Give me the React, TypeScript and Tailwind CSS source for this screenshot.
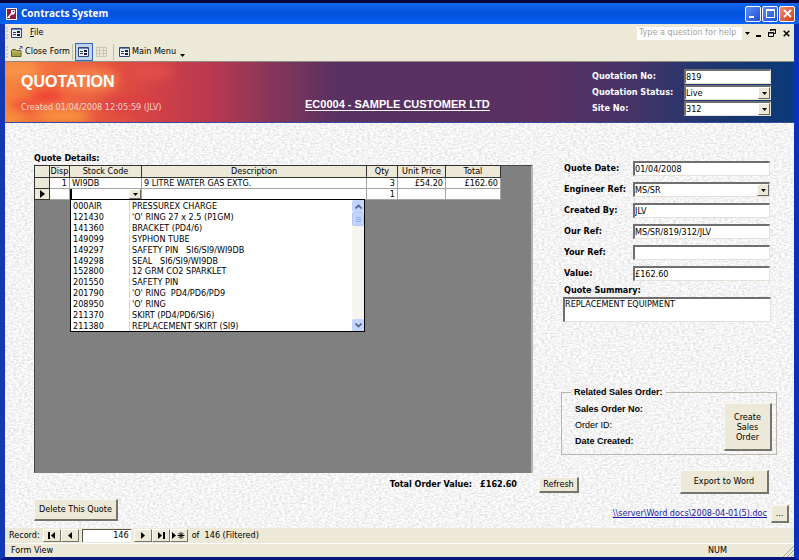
import { useState } from "react";
import type { ReactNode } from "react";

const lines = [
  { disp: 1, code: 'WI9DB', description: '9 LITRE WATER GAS EXTG.', qty: 3, price: '£54.20', total: '£162.60' },
];

const stockItems = [
  { code: '000AIR', name: 'PRESSUREX CHARGE' },
  { code: '121430', name: "'O' RING 27 x 2.5 (P1GM)" },
  { code: '141360', name: 'BRACKET (PD4/6)' },
  { code: '149099', name: 'SYPHON TUBE' },
  { code: '149297', name: 'SAFETY PIN   SI6/SI9/WI9DB' },
  { code: '149298', name: 'SEAL   SI6/SI9/WI9DB' },
  { code: '152800', name: '12 GRM CO2 SPARKLET' },
  { code: '201550', name: 'SAFETY PIN' },
  { code: '201790', name: "'O' RING  PD4/PD6/PD9" },
  { code: '208950', name: "'O' RING" },
  { code: '211370', name: 'SKIRT (PD4/PD6/SI6)' },
  { code: '211380', name: 'REPLACEMENT SKIRT (SI9)' },
];

const fields = [
  { id: 'quote-date', label: 'Quote Date:', value: '01/04/2008' },
  { id: 'engineer', label: 'Engineer Ref:', value: 'MS/SR', select: true },
  { id: 'created-by', label: 'Created By:', value: 'JLV' },
  { id: 'our-ref', label: 'Our Ref:', value: 'MS/SR/819/312/JLV' },
  { id: 'your-ref', label: 'Your Ref:', value: '' },
  { id: 'value', label: 'Value:', value: '£162.60' },
];

const sunken = "border-t-2 border-l-2 border-b border-r border-t-[#6f6f6f] border-l-[#6f6f6f] border-b-[#e4e2d8] border-r-[#e4e2d8] bg-white";
const raised = "border-t border-l border-b-2 border-r-2 border-t-[#f8f7f1] border-l-[#f8f7f1] border-b-[#77756b] border-r-[#77756b] bg-[#ece9d8]";

const DropArrow = () => (
  <span className="pointer-events-none absolute inset-y-0 right-0 flex w-3 items-center justify-center border border-t-white border-l-white border-b-[#6b695f] border-r-[#6b695f] bg-[#ece9d8]">
    <svg width="5" height="3" viewBox="0 0 5 3"><path d="M0 0h5L2.5 3z" /></svg>
  </span>
);

const TextField = ({ id, value }: { id: string; value: string }) => (
  <input id={id} defaultValue={value} className={`block h-[15px] w-full min-w-0 outline-none ${sunken}`} />
);

const SelectField = ({ id, value }: { id: string; value: string }) => (
  <div className={`relative h-[15px] w-full ${sunken}`}>
    <select id={id} defaultValue={value} className="block h-3 w-full appearance-none bg-transparent leading-3 outline-none">
      <option>{value}</option>
    </select>
    <DropArrow />
  </div>
);

const Button = ({ children, className }: { children: ReactNode; className: string }) => (
  <button type="button" className={`flex items-center justify-center ${raised} ${className}`}>{children}</button>
);

const FormIcon = () => (
  <svg width="11" height="10" viewBox="0 0 11 10">
    <path d="M.5.5h10v9H.5z" fill="#e9edf8" stroke="#33447c" />
    <path d="M1 1h9v1H1z" fill="#6a86c8" />
    <path d="M2 4.500h3M2 6.500h3" stroke="#333a55" />
    <path d="M6 3h3v2H6zM6 6h3v2H6z" fill="#1c2038" />
  </svg>
);

const Grip = () => <span className="h-3 w-[3px] border-l-2 border-dotted border-[#d0ccba]" />;

// woven paper look behind the form
const Paper = () => (
  <svg className="absolute inset-0 -z-10 h-full w-full" aria-hidden="true">
    <filter id="paper" x="0" y="0" width="100%" height="100%" colorInterpolationFilters="sRGB">
      <feTurbulence type="fractalNoise" baseFrequency="0.35 0.6" numOctaves="3" seed="4" />
      <feColorMatrix values=".25 0 0 0 .83  .25 0 0 0 .83  .25 0 0 0 .835  0 0 0 0 1" />
    </filter>
    <rect width="100%" height="100%" filter="url(#paper)" />
  </svg>
);

const Sunset = () => (
  <svg className="absolute inset-0 -z-10 h-full w-full" viewBox="0 0 789 60" preserveAspectRatio="none" aria-hidden="true">
    <defs>
      <linearGradient id="sky">
        <stop offset="0" stopColor="#f5823c" />
        <stop offset=".07" stopColor="#f06a40" />
        <stop offset=".14" stopColor="#e2503f" />
        <stop offset=".2" stopColor="#cf4048" />
        <stop offset=".27" stopColor="#b53850" />
        <stop offset=".34" stopColor="#85365a" />
        <stop offset=".42" stopColor="#583162" />
        <stop offset=".68" stopColor="#5a3062" />
        <stop offset=".8" stopColor="#443468" />
        <stop offset=".9" stopColor="#1c3670" />
        <stop offset="1" stopColor="#0a3a78" />
      </linearGradient>
      <filter id="soft" x="-30%" y="-60%" width="160%" height="220%"><feGaussianBlur stdDeviation="5" /></filter>
    </defs>
    <rect width="789" height="60" fill="url(#sky)" />
    <g filter="url(#soft)">
      <ellipse cx="85" cy="18" rx="28" ry="12" fill="#f6824c" />
      <ellipse cx="15" cy="8" rx="20" ry="10" fill="#f8924a" />
      <ellipse cx="42" cy="34" rx="16" ry="6" fill="#f03e34" />
      <ellipse cx="20" cy="44" rx="14" ry="5" fill="#ee4436" />
      <ellipse cx="60" cy="54" rx="26" ry="6" fill="#fa963e" />
      <ellipse cx="6" cy="56" rx="10" ry="6" fill="#f8923c" />
      <ellipse cx="125" cy="42" rx="28" ry="7" fill="#dd3c42" />
      <ellipse cx="145" cy="10" rx="22" ry="8" fill="#e0504a" />
    </g>
  </svg>
);

const TitleBar = () => (
  <header className="flex h-6 items-center gap-1 border-t-[3px] border-[#02083f] bg-linear-to-b from-[#1468ee] via-[#0450dc] to-[#0a62f6] pr-1 pl-[6px]">
    <svg width="11" height="12" viewBox="0 0 11 12">
      <path d="M0 0h11v12H0z" fill="#fff" />
      <path d="M1 1h9v10H1z" fill="#8e1c44" />
      <path d="M5 2h4v3L7 7 5 6z" fill="#fff" />
      <path d="M5.500 5.500L2 9.500h2" fill="none" stroke="#fff" strokeWidth="1.200" />
      <circle cx="7.500" cy="3.500" r=".8" fill="#8e1c44" />
    </svg>
    <h1 className="flex-1 font-['Open_Sans','Noto_Sans',sans-serif] text-[10px] font-bold text-white">Contracts System</h1>
    <div className="flex gap-px">
      <button type="button" aria-label="Minimize" className="flex h-4 w-4 items-end rounded-xs border border-white bg-linear-to-br from-[#5b8cf5] to-[#1c50d6] p-[3px]">
        <span className="h-[2px] w-[5px] bg-white" />
      </button>
      <button type="button" aria-label="Maximize" className="flex h-4 w-4 items-center justify-center rounded-xs border border-white bg-linear-to-br from-[#5b8cf5] to-[#1c50d6]">
        <span className="h-[9px] w-[9px] border border-t-2 border-white" />
      </button>
      <button type="button" aria-label="Close" className="flex h-4 w-4 items-center justify-center rounded-xs border border-white bg-linear-to-br from-[#ee8a6a] to-[#d03c14]">
        <svg width="9" height="9" viewBox="0 0 9 9"><path d="M1 1l7 7M8 1L1 8" stroke="#fff" strokeWidth="1.800" /></svg>
      </button>
    </div>
  </header>
);

const MenuBar = () => (
  <nav className="flex h-[18px] items-center pr-1 pl-px">
    <Grip />
    <span className="ml-[2px]"><FormIcon /></span>
    <button type="button" className="ml-2"><span className="underline">F</span>ile</button>
    <input aria-label="Type a question for help" placeholder="Type a question for help" className="ml-auto h-[13px] w-[105px] bg-white px-[2px] outline-none placeholder:text-[#a5a39b]" />
    <svg className="ml-[3px]" width="5" height="3" viewBox="0 0 5 3"><path d="M0 0h5L2.500 3z" /></svg>
    <button type="button" aria-label="Minimize form" className="ml-[6px] flex h-2 w-[6px] items-end"><span className="h-[2px] w-[5px] bg-black" /></button>
    <button type="button" aria-label="Restore form" className="ml-[6px]">
      <svg width="8" height="8" viewBox="0 0 8 8" fill="none" stroke="#000"><path d="M2.500 2V.5h5v4H6M2 1h6" /><path d="M.5 3.500h5v4h-5zM0 4h6" /></svg>
    </button>
    <button type="button" aria-label="Close form" className="ml-[7px]">
      <svg width="7" height="7" viewBox="0 0 7 7"><path d="M.7.700l5.600 5.600M6.300.700L.7 6.300" stroke="#000" strokeWidth="1.500" /></svg>
    </button>
  </nav>
);

const ToolBar = () => (
  <div className="flex h-5 items-center border-b border-[#8e8b80] pl-px">
    <Grip />
    <button type="button" className="ml-[2px] flex items-center gap-[2px]">
      <svg width="12" height="12" viewBox="0 0 12 12">
        <path d="M.5 10.500v-6l1-1h3l1 1h4.500v6z" fill="#a3a04a" stroke="#66632a" />
        <path d="M1 6h9" stroke="#c9c67a" />
        <path d="M8 3l2.500-1.500M9 .5h2v2" fill="none" stroke="#3a4c9c" />
      </svg>
      Close Form
    </button>
    <span className="ml-[2px] h-4 w-px bg-[#c0bda9]" />
    <button type="button" aria-label="Form view" className="ml-[2px] flex h-[18px] w-[18px] items-center justify-center border border-[#316ac5] bg-[#c1d2ee]"><FormIcon /></button>
    <button type="button" aria-label="Datasheet view" className="ml-[3px]">
      <svg width="11" height="10" viewBox="0 0 11 10" fill="none" stroke="#c9c6b6"><path d="M.5.500h10v9H.5zM0 3.500h11M0 6.500h11M3.500 0v10M7.500 0v10" /></svg>
    </button>
    <span className="ml-[6px] h-4 w-px bg-[#c0bda9]" />
    <button type="button" className="ml-[5px] flex items-center gap-[2px]"><FormIcon />Main Menu</button>
    <svg className="mt-2 ml-1" width="5" height="3" viewBox="0 0 5 3"><path d="M0 0h5L2.500 3z" /></svg>
  </div>
);

const Banner = () => (
  <section className="relative isolate flex h-[61px] border-b border-[#3a4a9c] text-white">
    <Sunset />
    <div className="w-[300px] pt-[10px] pl-4">
      <h2 className="font-['Liberation_Sans',sans-serif] text-[16px] leading-5 font-bold">QUOTATION</h2>
      <p className="mt-[9px] leading-3 text-[#f6d5d0]">Created 01/04/2008 12:05:59 (JLV)</p>
    </div>
    <h3 className="flex-1 pt-9 font-['Liberation_Sans',sans-serif] text-[11px] leading-3 font-bold underline underline-offset-2">EC0004 - SAMPLE CUSTOMER LTD</h3>
    <div className="mr-[23px] grid grid-cols-[92px_87px] content-start items-center gap-y-px pt-[7px]">
      <label htmlFor="quotation-no" className="font-bold">Quotation No:</label>
      <div className="text-black"><TextField id="quotation-no" value="819" /></div>
      <label htmlFor="quotation-status" className="font-bold">Quotation Status:</label>
      <div className="text-black"><SelectField id="quotation-status" value="Live" /></div>
      <label htmlFor="site-no" className="font-bold">Site No:</label>
      <div className="text-black"><SelectField id="site-no" value="312" /></div>
    </div>
  </section>
);

const StockList = ({ onPick }: { onPick: (code: string) => void }) => (
  <div className="absolute top-full left-0 z-10 flex w-[295px] border border-black bg-white">
    <ul role="listbox" aria-label="Stock items" className="flex h-[131px] flex-1 flex-col pt-px">
      {stockItems.map(item => (
        <li key={item.code} role="option" aria-selected="false" onClick={() => onPick(item.code)} className="flex min-h-0 flex-1 items-center">
          <span className="w-[59px] border-r border-[#d4d4d4] pl-[2px] leading-[10px]">{item.code}</span>
          <span className="pl-[2px] leading-[10px] whitespace-pre">{item.name}</span>
        </li>
      ))}
    </ul>
    <div className="flex w-3 flex-col bg-[#f6f5ef]">
      <button type="button" aria-label="Scroll up" className="flex h-3 items-center justify-center rounded-xs bg-[#c3d5fd]">
        <svg width="7" height="5" viewBox="0 0 7 5"><path d="M.5 4.500l3-3 3 3" fill="none" stroke="#4d6185" strokeWidth="1.600" /></svg>
      </button>
      <span className="flex h-[14px] flex-col items-center justify-center gap-px rounded-xs border border-[#b4c8f6] bg-[#c3d5fd]">
        <span className="h-px w-[5px] bg-[#8caaf0]" />
        <span className="h-px w-[5px] bg-[#8caaf0]" />
        <span className="h-px w-[5px] bg-[#8caaf0]" />
      </span>
      <button type="button" aria-label="Scroll down" className="mt-auto flex h-3 items-center justify-center rounded-xs bg-[#c3d5fd]">
        <svg width="7" height="5" viewBox="0 0 7 5"><path d="M.5.500l3 3 3-3" fill="none" stroke="#4d6185" strokeWidth="1.600" /></svg>
      </button>
    </div>
  </div>
);

const QuoteGrid = () => {
  const [code, setCode] = useState('');
  return (
    <div className="flex-1 border-t border-l border-r-2 border-t-[#444] border-l-[#444] border-r-[#b5b3aa] bg-[#808080]">
      <table className="-mt-px -ml-px w-[467px] table-fixed border-collapse bg-white leading-[10px] [&_td]:border [&_td]:border-[#a5a5a5] [&_td]:px-[2px] [&_td]:py-0 [&_th]:border [&_th]:border-[#333] [&_th]:bg-[#ece9d8] [&_th]:p-0 [&_th]:font-normal">
        <colgroup>
          <col className="w-[15px]" />
          <col className="w-5" />
          <col className="w-[72px]" />
          <col className="w-[225px]" />
          <col className="w-[31px]" />
          <col className="w-12" />
          <col className="w-[55px]" />
        </colgroup>
        <thead>
          <tr className="leading-[11px]">
            <th></th>
            <th>Disp</th>
            <th>Stock Code</th>
            <th>Description</th>
            <th>Qty</th>
            <th>Unit Price</th>
            <th>Total</th>
          </tr>
        </thead>
        <tbody>
          {lines.map(line => (
            <tr key={line.disp}>
              <th></th>
              <td className="text-right">{line.disp}</td>
              <td>{line.code}</td>
              <td>{line.description}</td>
              <td className="text-right">{line.qty}</td>
              <td className="text-right">{line.price}</td>
              <td className="text-right">{line.total}</td>
            </tr>
          ))}
          <tr>
            <th><svg className="mx-auto" width="5" height="8" viewBox="0 0 5 8"><path d="M0 0l5 4-5 4z" /></svg></th>
            <td></td>
            <td className="relative p-0!">
              <input aria-label="Stock Code" value={code} onChange={e => setCode(e.target.value)} className="block h-[10px] w-full border-l-2 border-black px-px outline-none" />
              <DropArrow />
              <StockList onPick={setCode} />
            </td>
            <td></td>
            <td className="text-right">1</td>
            <td></td>
            <td></td>
          </tr>
        </tbody>
      </table>
    </div>
  );
};

const SidePanel = () => (
  <aside className="flex w-[228px] flex-col pt-[38px]">
    <div className="mr-[19px] ml-[3px] flex flex-col gap-[6px]">
      {fields.map(field => (
        <div key={field.id} className="flex items-center">
          <label htmlFor={field.id} className="w-[69px] shrink-0 font-bold">{field.label}</label>
          {field.select ? <SelectField id={field.id} value={field.value} /> : <TextField id={field.id} value={field.value} />}
        </div>
      ))}
    </div>
    <label htmlFor="summary" className="mt-[2px] ml-[3px] leading-[14px] font-bold">Quote Summary:</label>
    <textarea id="summary" defaultValue="REPLACEMENT EQUIPMENT" className={`mr-[18px] ml-[2px] h-[25px] resize-none leading-[10px] outline-none ${sunken}`} />
    <div className="mt-auto">
      <fieldset className="mr-3 flex justify-between border border-[#b9b7ae] pr-1 pb-[3px] pl-[13px] font-['Liberation_Sans',sans-serif]">
        <legend className="-ml-1 px-[3px] leading-3 font-bold">Related Sales Order:</legend>
        <div className="flex flex-col gap-1 pt-[5px] leading-3">
          <p className="font-bold">Sales Order No:</p>
          <p>Order ID:</p>
          <p className="font-bold">Date Created:</p>
        </div>
        <Button className="mt-[5px] h-12 w-12 px-2 font-['DejaVu_Sans_Condensed','Noto_Sans',sans-serif] leading-[10px]">Create Sales Order</Button>
      </fieldset>
      <Button className="mt-[15px] mr-5 ml-auto h-6 w-[89px]">Export to Word</Button>
      <div className="mt-[11px] mb-[5px] flex items-center justify-end gap-1">
        <a href="#" className="text-[#1a1aa8] underline">\\server\Word docs\2008-04-01(5).doc</a>
        <Button className="h-[18px] w-[18px]">...</Button>
      </div>
    </div>
  </aside>
);

const RecordBar = () => {
  const nav = "flex h-[13px] items-center justify-center border border-t-white border-l-white border-b-[#77756b] border-r-[#77756b]";
  return (
    <div className="flex h-[15px] items-center bg-[#ece9d8] pl-1">
      <label htmlFor="record" className="mr-[3px]">Record:</label>
      <button type="button" aria-label="First record" className={`w-[18px] ${nav}`}>
        <svg width="8" height="7" viewBox="0 0 8 7"><path d="M0 0h2v7H0zM7 0v7L3 3.500z" /></svg>
      </button>
      <button type="button" aria-label="Previous record" className={`w-[18px] ${nav}`}>
        <svg width="4" height="7" viewBox="0 0 4 7"><path d="M4 0v7L0 3.500z" /></svg>
      </button>
      <input id="record" defaultValue="146" className="mx-[3px] h-[13px] w-[49px] border-t border-l border-[#55534a] bg-white px-[2px] text-right outline-none" />
      <button type="button" aria-label="Next record" className={`w-[18px] ${nav}`}>
        <svg width="4" height="7" viewBox="0 0 4 7"><path d="M0 0v7l4-3.500z" /></svg>
      </button>
      <button type="button" aria-label="Last record" className={`w-[18px] ${nav}`}>
        <svg width="8" height="7" viewBox="0 0 8 7"><path d="M6 0h2v7H6zM1 0v7l4-3.500z" /></svg>
      </button>
      <button type="button" aria-label="New record" className={`w-[18px] ${nav}`}>
        <svg width="13" height="7" viewBox="0 0 13 7"><path d="M0 0v7l4-3.500z" /><path d="M9 0v7M5.500 3.500h7M6.500 1l5 5M11.500 1l-5 5" stroke="#000" /></svg>
      </button>
      <span className="ml-1 whitespace-pre">of  146 (Filtered)</span>
    </div>
  );
};

const StatusBar = () => (
  <footer className="flex h-[14px] items-center border-t border-white bg-[#ece9d8] pl-[6px]">
    <span>Form View</span>
    <span className="mr-[55px] ml-auto">NUM</span>
    <svg width="12" height="12" viewBox="0 0 12 12"><path d="M1 12L12 1M5 12l7-7M9 12l3-3" stroke="#a5a294" /></svg>
  </footer>
);

export default function App() {
  return (
    <div className="flex min-h-screen flex-col bg-[#0a3cc8] font-['DejaVu_Sans_Condensed','Noto_Sans',sans-serif] text-[9px] text-black">
      <TitleBar />
      <div className="flex flex-1 flex-col border-r-[5px] border-b-[3px] border-l-[5px] border-r-[#0831c0] border-b-[#06187c] border-l-[#1238b4] bg-[#ece9d8]">
        <MenuBar />
        <ToolBar />
        <Banner />
        <main className="relative isolate flex flex-1 gap-7 pr-[5px] pl-[29px]">
          <Paper />
          <section className="flex flex-1 flex-col pt-7 pb-[7px]">
            <h2 className="leading-[14px] font-bold">Quote Details:</h2>
            <QuoteGrid />
            <div className="-mr-[46px] flex h-6 items-center justify-end font-bold">
              <span>Total Order Value:</span>
              <output className="mr-[22px] ml-2">£162.60</output>
              <Button className="h-4 w-10 font-normal">Refresh</Button>
            </div>
            <Button className="mt-[2px] h-[22px] w-[84px]">Delete This Quote</Button>
          </section>
          <SidePanel />
        </main>
        <RecordBar />
        <StatusBar />
      </div>
    </div>
  );
}
